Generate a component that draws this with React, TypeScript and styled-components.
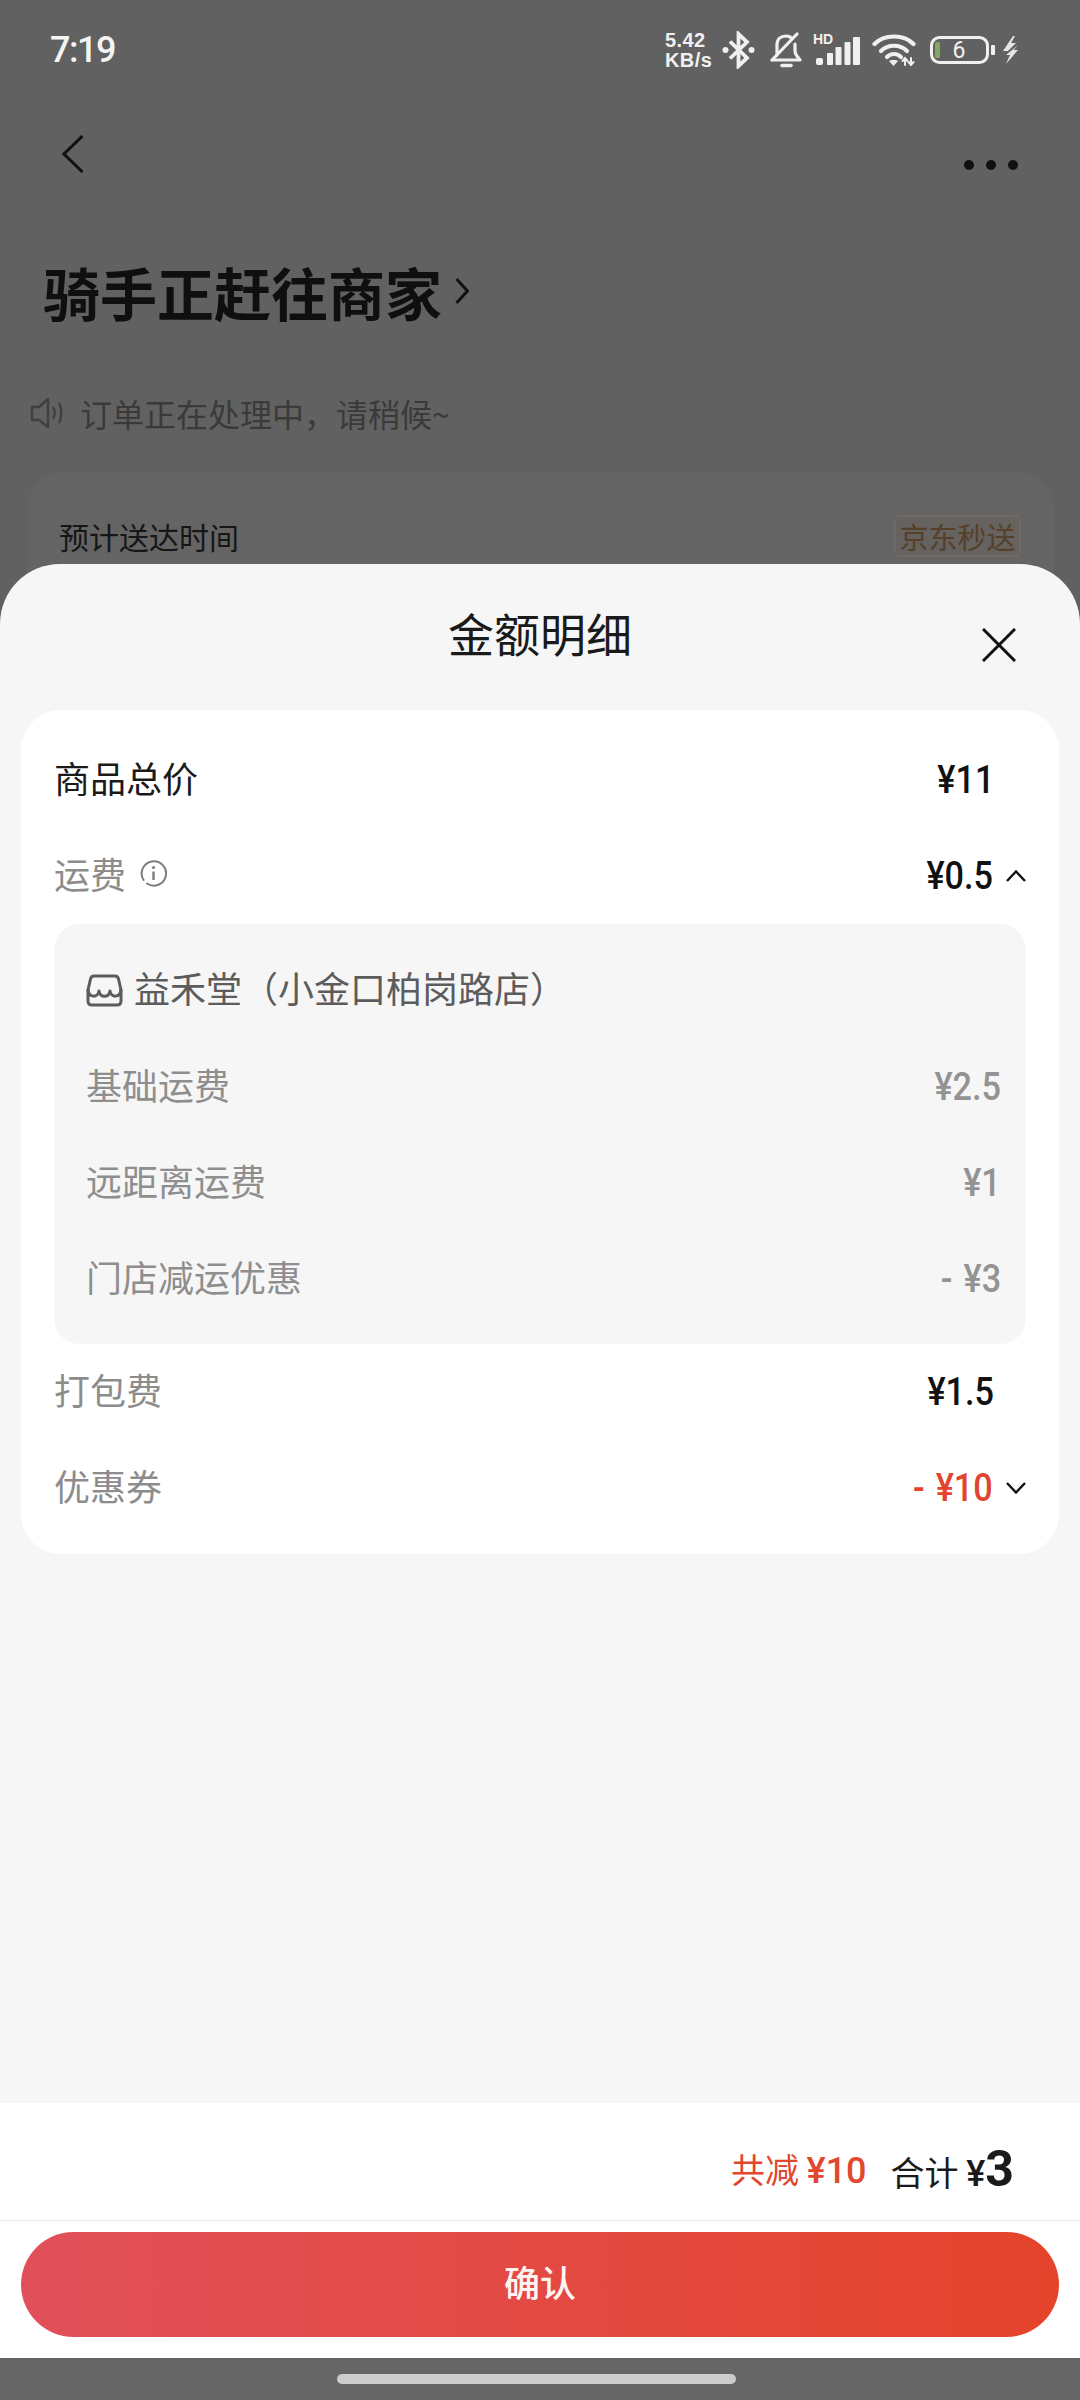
import React from "react";
import styled, { createGlobalStyle } from "styled-components";

const CJK = `"Noto Sans CJK SC", "Noto Sans", sans-serif`;
const NUM = `"Roboto", "Noto Sans CJK SC", sans-serif`;

const GlobalStyle = createGlobalStyle`
    html, body {
        margin: 0;
        padding: 0;
        background: #616161;
    }
    * {
        box-sizing: border-box;
    }
`;

const Page = styled.div`
    position: relative;
    width: 1080px;
    height: 2400px;
    overflow: hidden;
    background: #616161;
    font-family: ${CJK};
`;

const StatusBar = styled.div`
    display: flex;
    align-items: center;
    justify-content: space-between;
    height: 100px;
    padding: 0 62px 0 50px;
`;

const Clock = styled.span`
    font-family: "Roboto", sans-serif;
    font-size: 36px;
    font-weight: 500;
    color: #f4f4f4;
    letter-spacing: -1.5px;
`;

const StatusIcons = styled.div`
    display: flex;
    align-items: center;
`;

const Speed = styled.div`
    display: flex;
    flex-direction: column;
    width: 47px;
    font-family: "Liberation Sans", sans-serif;
    font-size: 20px;
    font-weight: 700;
    line-height: 20px;
    letter-spacing: 0.4px;
    white-space: nowrap;
    color: #f0f0f0;
`;

const StatusIcon = styled.svg<{ $gap: number }>`
    display: block;
    margin-left: ${(p) => p.$gap}px;
`;

const NavRow = styled.div`
    display: flex;
    align-items: center;
    justify-content: space-between;
    height: 74px;
    margin-top: 17px;
    padding: 0 62px;
`;

const MoreDots = styled.svg`
    display: block;
    margin-top: 22px;
`;

const TitleRow = styled.div`
    display: flex;
    align-items: center;
    gap: 13px;
    margin-top: 68px;
    padding-left: 43px;
`;

const OrderTitle = styled.h1`
    margin: 0;
    font-size: 57px;
    line-height: 64px;
    font-weight: 700;
    color: #0f0f0f;
`;

const Notice = styled.div`
    display: flex;
    align-items: center;
    gap: 16px;
    margin-top: 68px;
    padding-left: 30px;
    font-size: 32px;
    line-height: 44px;
    color: #3a3a3a;
`;

const EtaCard = styled.div`
    display: flex;
    align-items: flex-start;
    justify-content: space-between;
    height: 200px;
    margin: 37px 26px 0 27px;
    padding: 43px 33px 0 32px;
    border-radius: 36px;
    background: #646464;
    font-size: 30px;
    line-height: 42px;
    color: #161616;
`;

const SpeedBadge = styled.span`
    display: flex;
    align-items: center;
    justify-content: center;
    width: 127px;
    height: 42px;
    border: 2px solid #716a62;
    border-radius: 6px;
    background: #65625f;
    font-size: 29px;
    color: #55402a;
`;

const Sheet = styled.div`
    position: absolute;
    top: 564px;
    left: 0;
    right: 0;
    bottom: 42px;
    display: flex;
    flex-direction: column;
    border-radius: 60px 60px 0 0;
    background: #f6f6f6;
`;

const SheetHeader = styled.div`
    position: relative;
    display: flex;
    justify-content: center;
    height: 146px;
    padding-top: 37px;
`;

const SheetTitle = styled.h2`
    margin: 0;
    font-size: 46px;
    line-height: 62px;
    font-weight: 400;
    color: #1a1a1a;
`;

const CloseIcon = styled.svg`
    position: absolute;
    top: 64px;
    right: 64px;
`;

const DetailCard = styled.div`
    margin: 0 21px;
    padding: 22px 33px 18px;
    border-radius: 40px;
    background: #ffffff;
`;

const Row = styled.div`
    display: flex;
    align-items: center;
    justify-content: space-between;
    height: 96px;
`;

const RowLabel = styled.span<{ $muted?: boolean }>`
    display: flex;
    align-items: center;
    gap: 14px;
    padding-bottom: 7px;
    font-size: 36px;
    color: ${(p) => (p.$muted ? "#8c8c8c" : "#1a1a1a")};
`;

const RowValue = styled.span<{ $red?: boolean; $chevron?: boolean }>`
    display: flex;
    align-items: center;
    margin-right: ${(p) => (p.$chevron ? "0" : "32px")};
    color: ${(p) => (p.$red ? "#e2442f" : "#111111")};
`;

// the app's digit face is narrower than Roboto
const Money = styled.span<{ $grey?: boolean }>`
    display: inline-block;
    font-family: ${NUM};
    font-size: 38px;
    font-weight: 500;
    word-spacing: 3px;
    color: ${(p) => (p.$grey ? "#939393" : "inherit")};
    transform: scaleX(0.9);
    transform-origin: right center;
`;

const ChevronIcon = styled.svg`
    display: block;
    margin-left: 13px;
`;

const SubBox = styled.div`
    padding: 17px 25px 17px 32px;
    border-radius: 26px;
    background: #f6f6f6;
`;

const StoreRow = styled.div`
    display: flex;
    align-items: center;
    gap: 11px;
    height: 98px;
    font-size: 36px;
    color: #5c5c5c;
`;

const StoreName = styled.span`
    padding-bottom: 6px;
`;

const SubLabel = styled.span`
    padding-bottom: 7px;
    font-size: 36px;
    color: #8e8e8e;
`;

const Spacer = styled.div`
    flex: 1;
`;

const Footer = styled.div`
    background: #ffffff;
`;

const Summary = styled.div`
    display: flex;
    align-items: center;
    justify-content: flex-end;
    height: 118px;
    padding: 14px 66px 0 0;
    border-bottom: 1px solid #e8e8e8;
    font-size: 34px;
    color: #1a1a1a;
`;

const Saved = styled.span`
    margin-right: 24px;
    color: #e2472f;
`;

const Amount = styled.span<{ $big?: boolean }>`
    font-family: ${NUM};
    font-weight: ${(p) => (p.$big ? 700 : 500)};
    font-size: ${(p) => (p.$big ? "50px" : "36px")};
`;

const ConfirmButton = styled.button`
    display: block;
    width: 1038px;
    height: 105px;
    margin: 11px 21px 21px;
    padding: 0 0 8px;
    border: none;
    border-radius: 53px;
    background: linear-gradient(90deg, #e1505a 0%, #e5432b 100%);
    font-family: ${CJK};
    font-size: 36px;
    font-weight: 500;
    color: #fff5f2;
`;

const NavBar = styled.div`
    position: absolute;
    left: 0;
    right: 0;
    bottom: 0;
    display: flex;
    justify-content: center;
    height: 42px;
    padding: 16px 7px 0 0;
    background: #666666;
`;

const HomePill = styled.div`
    width: 399px;
    height: 10px;
    border-radius: 5px;
    background: #cccccc;
`;

const BluetoothIcon = () => (
    <StatusIcon $gap={10} width="33" height="38" viewBox="0 0 33 38" fill="none" stroke="#f0f0f0" strokeWidth="3.8">
        <path d="M8 10.5 L25 27 L16.5 35 V3 L25 11 L8 27.5" />
        <circle cx="3.5" cy="19" r="3" fill="#f0f0f0" stroke="none" />
        <circle cx="29.5" cy="19" r="3" fill="#f0f0f0" stroke="none" />
    </StatusIcon>
);

const BellOffIcon = () => (
    <StatusIcon $gap={15} width="32" height="36" viewBox="0 0 32 36" fill="none" stroke="#f0f0f0" strokeWidth="3.2" strokeLinecap="round">
        <path d="M7 23 V13 C7 7 11 4 16 4 C18 4 20 4.5 21.5 6" />
        <path d="M25 12 V19 C25 23 28 25 30 28 H3" strokeLinejoin="round" />
        <path d="M27 2 L2 28" />
        <path d="M12 33.5 H21" strokeWidth="3.6" />
    </StatusIcon>
);

const SignalIcon = () => (
    <StatusIcon $gap={11} width="47" height="36" viewBox="0 0 47 36" fill="#f0f0f0">
        <text x="0" y="12" fontFamily="Liberation Sans, sans-serif" fontWeight="700" fontSize="14">HD</text>
        <rect x="3" y="26" width="7" height="7" rx="2" />
        <rect x="14" y="21" width="6" height="12" rx="1" />
        <rect x="22.5" y="15" width="6" height="18" rx="1" />
        <rect x="31.5" y="10" width="6" height="23" rx="1" />
        <rect x="40" y="5" width="7" height="28" rx="1" />
    </StatusIcon>
);

const WifiIcon = () => (
    <StatusIcon $gap={12} width="44" height="32" viewBox="0 0 44 32" fill="none" stroke="#f0f0f0" strokeWidth="4.2" strokeLinecap="round">
        <path d="M2.5 10 C12 0 32 0 41.5 10" />
        <path d="M9 17 C16 10 28 10 35 17" />
        <path d="M15 23 C19 19 25 19 29 23" />
        <path d="M17 27 L21.5 32 L26 27 C24 25.6 19 25.6 17 27 Z" fill="#f0f0f0" stroke="none" />
        <path d="M33 31 V25 M30.5 27 L33 24 L35.5 27 M39 24 V30 M36.5 28 L39 31 L41.5 28" strokeWidth="2" />
    </StatusIcon>
);

const BatteryIcon = () => (
    <StatusIcon $gap={14} width="65" height="28" viewBox="0 0 65 28">
        <rect x="1.5" y="1.5" width="56" height="25" rx="8" fill="none" stroke="#f0f0f0" strokeWidth="3" />
        <rect x="5" y="6" width="5" height="16" rx="1.5" fill="#82a862" />
        <text x="29" y="22" textAnchor="middle" fontFamily="Roboto, sans-serif" fontSize="23" fill="#f0f0f0">6</text>
        <rect x="61" y="9" width="4" height="10" rx="1" fill="#f0f0f0" />
    </StatusIcon>
);

const BoltIcon = () => (
    <StatusIcon $gap={8} width="15" height="28" viewBox="0 0 15 28" fill="#e6e6e6">
        <path d="M10 0 L0 15 H5 L13 7 H8 L12 0 Z" />
        <path d="M15 9 L3 19 H7 L3 28 L15 14 H10.5 Z" />
    </StatusIcon>
);

const SpeakerIcon = () => (
    <svg width="34" height="34" viewBox="0 0 34 34" fill="none" stroke="#3f3f3f" strokeWidth="2.4">
        <path d="M2 11 H9 L18 3 V31 L9 24 H2 Z" strokeLinejoin="round" />
        <path d="M23 11 C25 14.5 25 19.5 23 23" />
        <path d="M29 7 C32 13 32 21 29 27" />
    </svg>
);

const InfoIcon = () => (
    <svg width="27" height="28" viewBox="0 0 27 28" fill="none" stroke="#7d7d7d" strokeWidth="2">
        <path d="M7 24.5 A12.2 12.2 0 1 0 3.6 21" strokeLinecap="round" />
        <circle cx="13.5" cy="8.5" r="1.6" fill="#7d7d7d" stroke="none" />
        <path d="M13.5 12.5 V21" strokeWidth="2.4" />
    </svg>
);

const StoreIcon = () => (
    <svg width="37" height="33" viewBox="0 0 37 33" fill="none" stroke="#5c5c5c" strokeWidth="3" strokeLinejoin="round">
        <path d="M8 2 H29 C31 2 32 3 32.5 5 L35 16 V27 C35 30 33.5 31 31 31 H6 C3.5 31 2 30 2 27 V16 L4.5 5 C5 3 6 2 8 2 Z" />
        <path d="M2 16 C3 24 12 24 13 17 C14 24 23 24 24 17 C25 24 34 24 35 16" strokeLinecap="round" />
    </svg>
);

const Chevron = ({ up }: { up?: boolean }) => (
    <ChevronIcon width="20" height="12" viewBox="0 0 20 12" fill="none" stroke="#111111" strokeWidth="2.4">
        <path d={up ? "M1 11 L10 1.5 L19 11" : "M1 1 L10 10.5 L19 1"} />
    </ChevronIcon>
);

export default function App() {
    return (
        <Page>
            <GlobalStyle />

            <StatusBar>
                <Clock>7:19</Clock>
                <StatusIcons>
                    <Speed>
                        <span>5.42</span>
                        <span>KB/s</span>
                    </Speed>
                    <BluetoothIcon />
                    <BellOffIcon />
                    <SignalIcon />
                    <WifiIcon />
                    <BatteryIcon />
                    <BoltIcon />
                </StatusIcons>
            </StatusBar>

            <NavRow>
                <svg width="22" height="38" viewBox="0 0 22 38" fill="none" stroke="#111111" strokeWidth="3">
                    <path d="M20.5 1 L2 19 L20.5 37" />
                </svg>
                <MoreDots width="54" height="10" viewBox="0 0 54 10" fill="#111111">
                    <circle cx="5" cy="5" r="5" />
                    <circle cx="27" cy="5" r="5" />
                    <circle cx="49" cy="5" r="5" />
                </MoreDots>
            </NavRow>

            <TitleRow>
                <OrderTitle>骑手正赶往商家</OrderTitle>
                <svg width="14" height="26" viewBox="0 0 14 26" fill="none" stroke="#111111" strokeWidth="3">
                    <path d="M1.5 1 L12.5 13 L1.5 25" />
                </svg>
            </TitleRow>

            <Notice>
                <SpeakerIcon />
                <span>订单正在处理中，请稍候~</span>
            </Notice>

            <EtaCard>
                <span>预计送达时间</span>
                <SpeedBadge>京东秒送</SpeedBadge>
            </EtaCard>

            <Sheet>
                <SheetHeader>
                    <SheetTitle>金额明细</SheetTitle>
                    <CloseIcon width="34" height="34" viewBox="0 0 34 34" fill="none" stroke="#111111" strokeWidth="3">
                        <path d="M1 1 L33 33 M33 1 L1 33" />
                    </CloseIcon>
                </SheetHeader>

                <DetailCard>
                    <Row>
                        <RowLabel>商品总价</RowLabel>
                        <RowValue><Money>¥11</Money></RowValue>
                    </Row>
                    <Row>
                        <RowLabel $muted>
                            运费
                            <InfoIcon />
                        </RowLabel>
                        <RowValue $chevron>
                            <Money>¥0.5</Money>
                            <Chevron up />
                        </RowValue>
                    </Row>

                    <SubBox>
                        <StoreRow>
                            <StoreIcon />
                            <StoreName>益禾堂（小金口柏岗路店）</StoreName>
                        </StoreRow>
                        <Row>
                            <SubLabel>基础运费</SubLabel>
                            <Money $grey>¥2.5</Money>
                        </Row>
                        <Row>
                            <SubLabel>远距离运费</SubLabel>
                            <Money $grey>¥1</Money>
                        </Row>
                        <Row>
                            <SubLabel>门店减运优惠</SubLabel>
                            <Money $grey>- ¥3</Money>
                        </Row>
                    </SubBox>

                    <Row>
                        <RowLabel $muted>打包费</RowLabel>
                        <RowValue><Money>¥1.5</Money></RowValue>
                    </Row>
                    <Row>
                        <RowLabel $muted>优惠券</RowLabel>
                        <RowValue $red $chevron>
                            <Money>- ¥10</Money>
                            <Chevron />
                        </RowValue>
                    </Row>
                </DetailCard>

                <Spacer />

                <Footer>
                    <Summary>
                        <Saved>
                            共减 <Amount>¥10</Amount>
                        </Saved>
                        <span>
                            合计 <Amount>¥</Amount>
                            <Amount $big>3</Amount>
                        </span>
                    </Summary>
                    <ConfirmButton>确认</ConfirmButton>
                </Footer>
            </Sheet>

            <NavBar>
                <HomePill />
            </NavBar>
        </Page>
    );
}
